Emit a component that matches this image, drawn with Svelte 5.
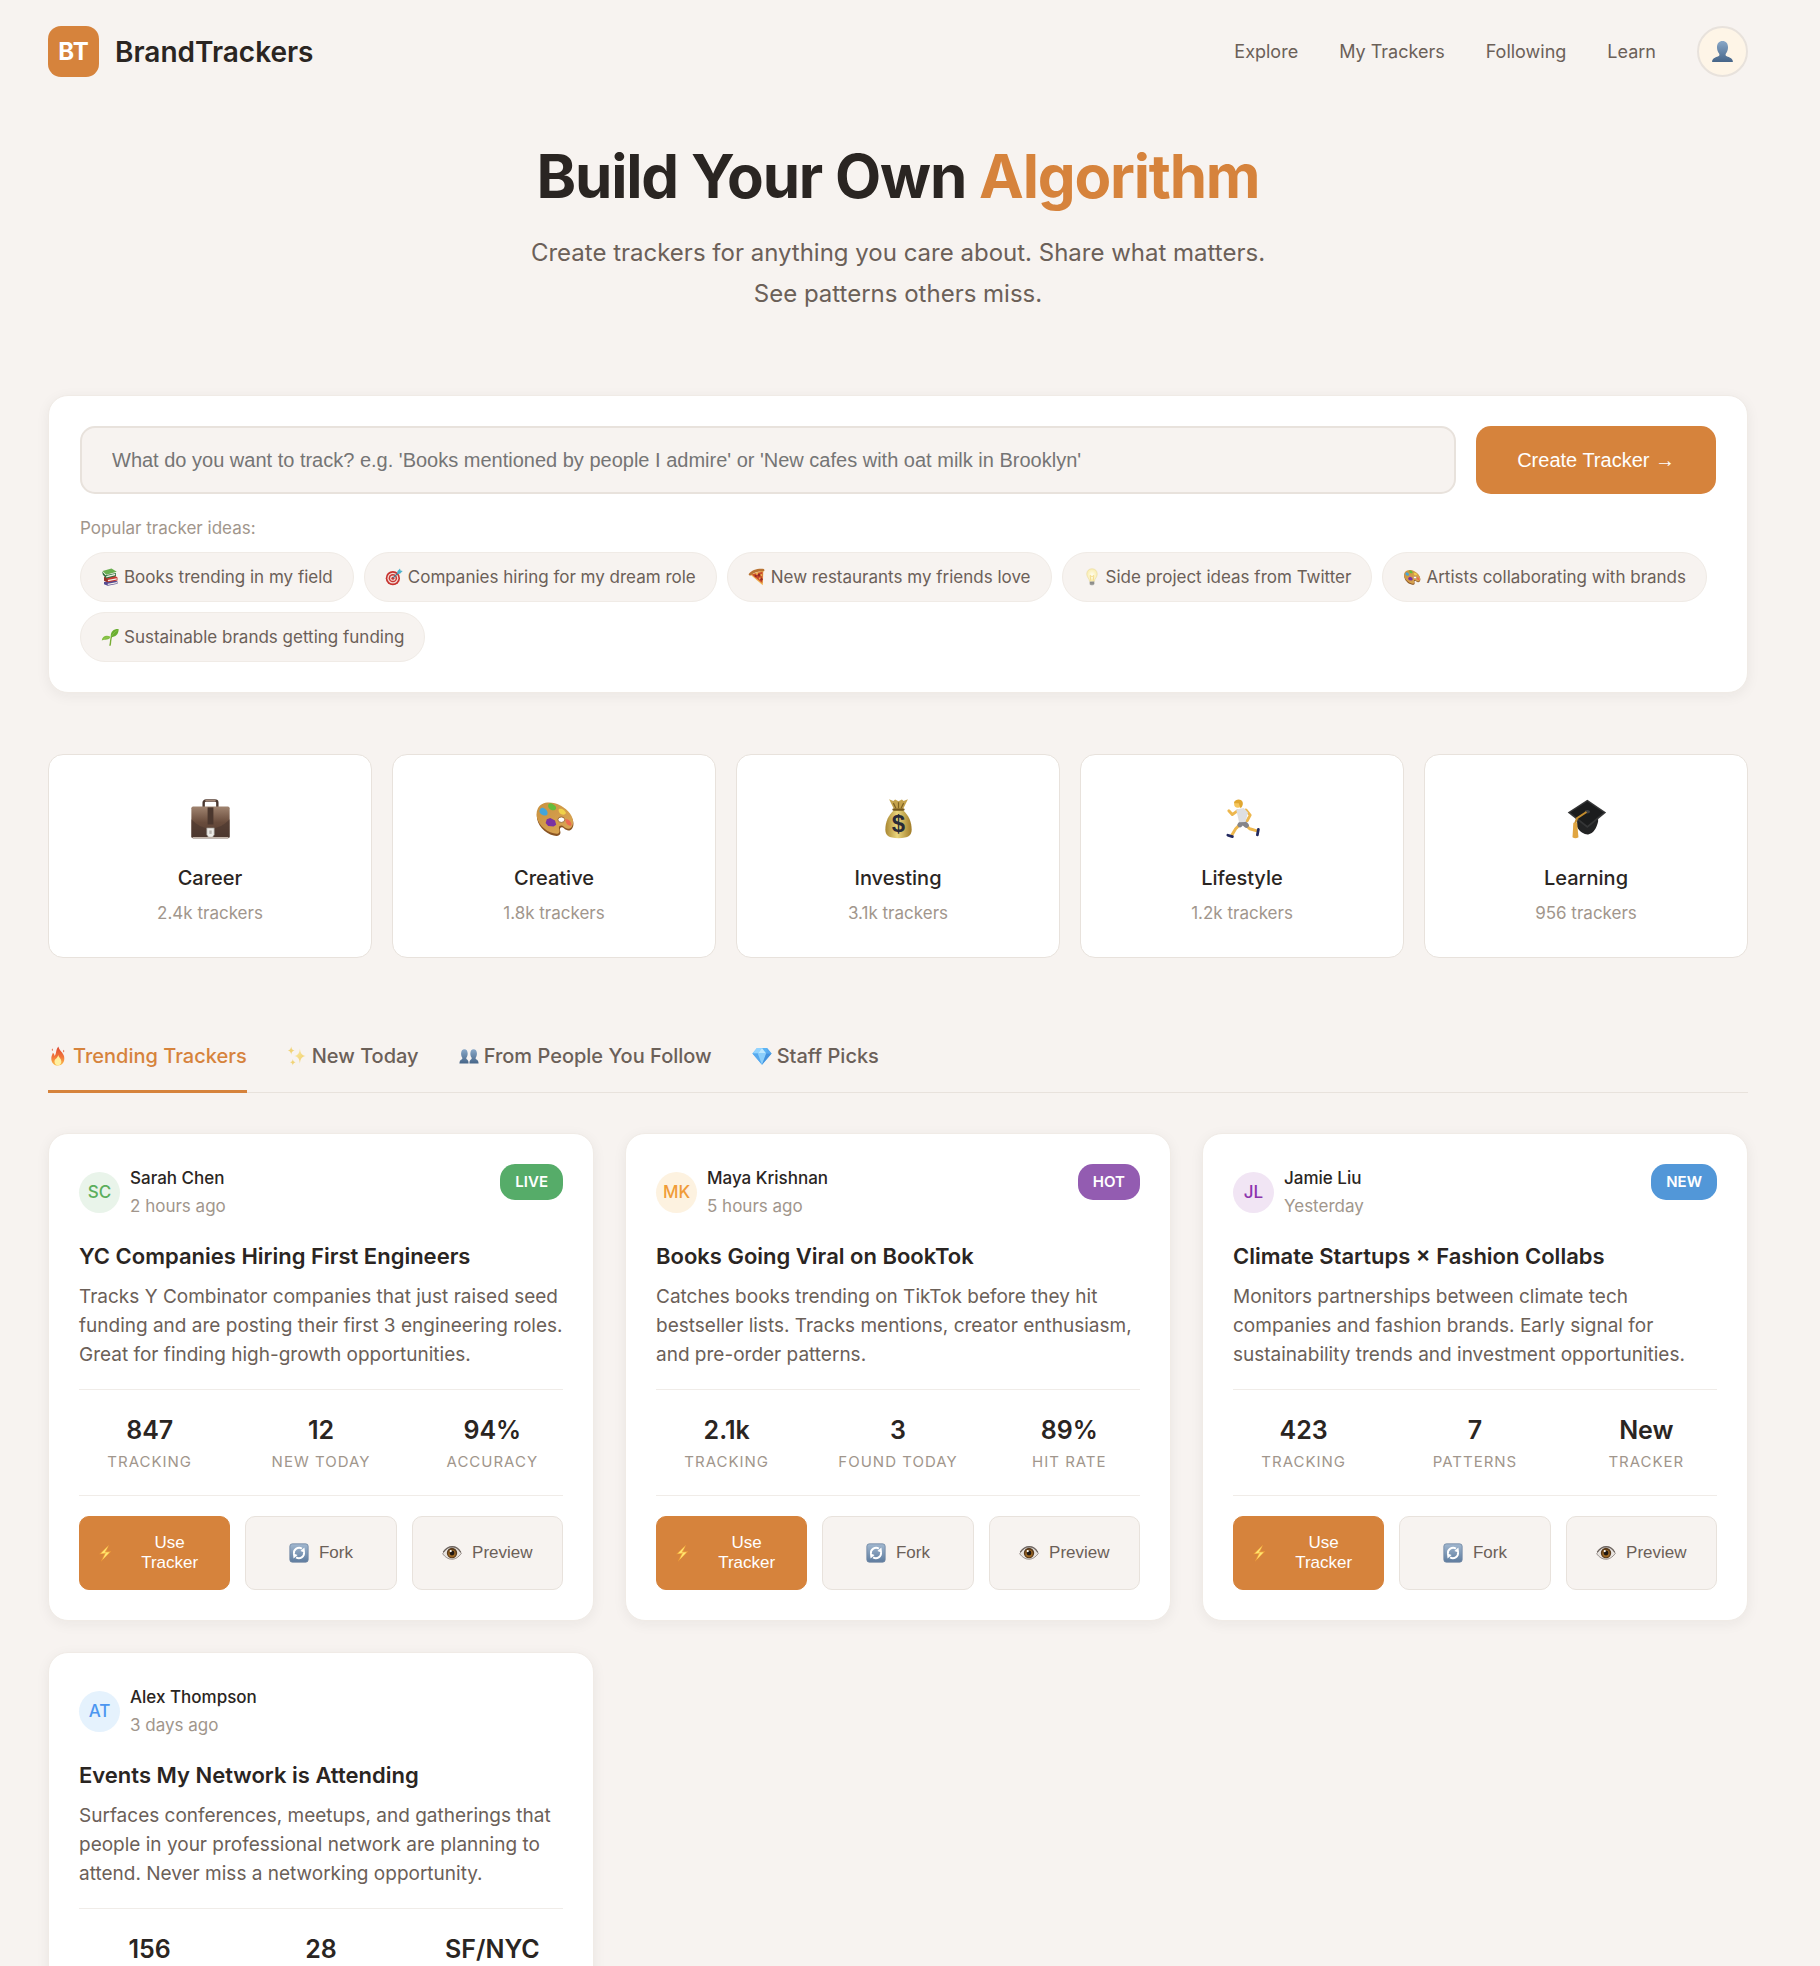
<script>
  const navLinks = ['Explore', 'My Trackers', 'Following', 'Learn'];

  const ideas = [
    { icon: 'books', text: 'Books trending in my field' },
    { icon: 'target', text: 'Companies hiring for my dream role' },
    { icon: 'pizza', text: 'New restaurants my friends love' },
    { icon: 'bulb', text: 'Side project ideas from Twitter' },
    { icon: 'palette', text: 'Artists collaborating with brands' },
    { icon: 'seedling', text: 'Sustainable brands getting funding' }
  ];

  const categories = [
    { icon: 'briefcase', name: 'Career', count: '2.4k trackers' },
    { icon: 'palette', name: 'Creative', count: '1.8k trackers' },
    { icon: 'money', name: 'Investing', count: '3.1k trackers' },
    { icon: 'runner', name: 'Lifestyle', count: '1.2k trackers' },
    { icon: 'cap', name: 'Learning', count: '956 trackers' }
  ];

  const tabs = [
    { icon: 'fire', text: 'Trending Trackers' },
    { icon: 'sparkles', text: 'New Today' },
    { icon: 'people', text: 'From People You Follow' },
    { icon: 'gem', text: 'Staff Picks' }
  ];

  const trackers = [
    {
      initials: 'SC', tone: 'green', author: 'Sarah Chen', time: '2 hours ago', badge: 'LIVE',
      title: 'YC Companies Hiring First Engineers',
      text: 'Tracks Y Combinator companies that just raised seed funding and are posting their first 3 engineering roles. Great for finding high-growth opportunities.',
      stats: [['847', 'Tracking'], ['12', 'New today'], ['94%', 'Accuracy']]
    },
    {
      initials: 'MK', tone: 'amber', author: 'Maya Krishnan', time: '5 hours ago', badge: 'HOT',
      title: 'Books Going Viral on BookTok',
      text: 'Catches books trending on TikTok before they hit bestseller lists. Tracks mentions, creator enthusiasm, and pre-order patterns.',
      stats: [['2.1k', 'Tracking'], ['3', 'Found today'], ['89%', 'Hit rate']]
    },
    {
      initials: 'JL', tone: 'purple', author: 'Jamie Liu', time: 'Yesterday', badge: 'NEW',
      title: 'Climate Startups × Fashion Collabs',
      text: 'Monitors partnerships between climate tech companies and fashion brands. Early signal for sustainability trends and investment opportunities.',
      stats: [['423', 'Tracking'], ['7', 'Patterns'], ['New', 'Tracker']]
    },
    {
      initials: 'AT', tone: 'blue', author: 'Alex Thompson', time: '3 days ago', badge: '',
      title: 'Events My Network is Attending',
      text: 'Surfaces conferences, meetups, and gatherings that people in your professional network are planning to attend. Never miss a networking opportunity.',
      stats: [['156', 'Tracking'], ['28', 'Events'], ['SF/NYC', 'Location']]
    }
  ];

  let query = $state('');
  let activeTab = $state(0);
</script>

{#snippet icon(name)}
  <svg class="icon" viewBox="0 0 24 24" aria-hidden="true">
    {#if name === 'user'}
      <path fill="url(#steel)" d="M12 2c3.3 0 5.3 2.4 5.3 6 0 2.400-.8 4.500-2 5.900-.5.7-.5 1.900.2 2.500 1.300 1 6.500 1.300 6.500 5.600H2c0-4.300 5.200-4.600 6.500-5.600.7-.6.7-1.800.2-2.500-1.200-1.400-2-3.500-2-5.900 0-3.600 2-6 5.300-6z" />
    {:else if name === 'people'}
      <path fill="url(#steel)" d="M6.500 4c2.300 0 3.900 1.900 3.900 5 0 2-.5 3.700-1.400 4.800-.4.600-.3 1.700.3 2.100 1 .7 2.200 1.300 2.200 5.100H.5c0-3.400 1.600-4.200 3-5.100.7-.5.700-1.500.3-2.100-.8-1.100-1.300-2.800-1.300-4.800 0-3.100 1.700-5 4-5zM17.500 4c2.300 0 4 1.900 4 5 0 2-.5 3.700-1.300 4.800-.4.600-.4 1.600.3 2.100 1.400.9 3 1.700 3 5.100h-11c0-3.800 1.200-4.400 2.200-5.100.6-.4.7-1.500.3-2.100-.9-1.100-1.400-2.800-1.400-4.800 0-3.100 1.600-5 3.900-5z" />
    {:else if name === 'books'}
      <path fill="#554a91" d="M4 18.500l13-2.500 5 2v3L9 23.500l-5-2z" />
      <path fill="#f2efe8" d="M9 21l12.500-2.300v1.700L9 22.700z" />
      <path fill="#c53a34" d="M4 12l14-2 4 2.500v4L9 19l-4-2z" />
      <path fill="#f5f2ea" d="M9 16l12-2.200v1.600L9 17.800z" />
      <path fill="#963029" d="M4 12l5 2.500V19l-5-2z" />
      <path fill="#2c6d3a" d="M1.500 4.500L6 9.500l14-3v4L7 14l-4.500-5z" />
      <path fill="#e9efe3" d="M7 10.500l12-2.800v1.800L7 12.500z" />
      <path fill="#6aae50" d="M2 4L14 .8 21 5 7 9z" />
    {:else if name === 'target'}
      <circle cx="10.500" cy="13.500" r="9.500" fill="#c7332f" />
      <circle cx="10.500" cy="13.500" r="7.300" fill="#f3dcd8" />
      <circle cx="10.500" cy="13.500" r="5.600" fill="#cb3934" />
      <circle cx="10.500" cy="13.500" r="3.600" fill="#f3dcd8" />
      <circle cx="10.500" cy="13.500" r="2" fill="#c7332f" />
      <path stroke="#427f94" stroke-width="1.500" d="M10.500 13.500L19 5" />
      <path fill="#4eb2cd" d="M16.500 7.500V4.200L20 .5l.6 2.900 3 .5-3.600 3.600z" />
    {:else if name === 'pizza'}
      <path fill="#edae4c" d="M3 8.500L20.500 3l-.8 20z" />
      <path fill="#c84a2c" d="M5 8.800L19.500 5l-.5 15z" />
      <path fill="#b97332" d="M1 8C5 2.500 13 .3 21 1.200c1 .2 1.200 2.800.2 3C14 4 8 5.500 3.500 10 2.300 10.500.5 9 1 8z" />
      <g fill="#eeb050"><circle cx="12" cy="7.800" r="1.500" /><circle cx="17.500" cy="9.500" r="1.400" /><circle cx="15.800" cy="14" r="1.400" /></g>
      <g fill="#982a20"><circle cx="14.700" cy="9.500" r="1.800" /><circle cx="10.300" cy="10.700" r="1.500" /><circle cx="18" cy="15" r="1.600" /></g>
    {:else if name === 'bulb'}
      <path fill="url(#glow)" stroke="#e6d79c" stroke-width=".7" d="M12 1c4.300 0 7 3 7 7 0 4.500-3.500 6-3.800 10H8.800C8.500 14 5 12.500 5 8c0-4 2.700-7 7-7z" />
      <path fill="none" stroke="#eecb60" stroke-width=".8" d="M10.500 17L9.500 10l2.500 1.500 2.500-1.500-1 7" />
      <path fill="#a9a9a6" d="M9 18h6v3.500L13.500 23h-3L9 21.500z" />
      <path stroke="#6d6d6b" stroke-width=".7" d="M9 19.500l6-.5M9 21.300l6-.5" />
    {:else if name === 'palette'}
      <path fill="#895423" d="M2.500 7c2-4 8-4.500 13.500-1.500 5.500 3 8.500 8.500 6.500 12-1.300 2.200-3.500 1.700-5 .2-1.200-1.200-2.800-.4-2.200 1.400.8 2.400-1 3.700-3.800 2.900C5 20.500-.5 13 2.500 7z" />
      <path fill="url(#wood)" d="M2.300 6c2-4 8-4.500 13.500-1.500 5.500 3 8.500 8.500 6.500 12-1.300 2.200-3.500 1.700-5 .2-1.200-1.200-3.200-.4-2.600 1.400.8 2.400-.7 3.400-3.200 2.600C5 19-.7 12 2.300 6z" />
      <ellipse cx="16" cy="12.700" rx="2" ry="1.600" fill="#fff" stroke="#94602a" stroke-width=".5" />
      <path fill="#42a5dc" d="M3.300 7c1-1.800 2.200-1.500 3.500-.4C8.500 8 8.200 10 7 10.200c-2 .3-4.300-1.200-3.700-3.200z" />
      <path fill="#64bc3c" d="M8.500 3.600c1-1 2-.3 3 .3 2 .9 1.800 3 .2 3.200-2 .3-4.200-1.700-3.200-3.500z" />
      <path fill="#efd149" d="M14.600 6.500c1.200-.9 3.800.6 4.100 2.200.1 1.400-2.700 1.300-3.600.2-.6-.7-1-1.800-.5-2.400z" />
      <path fill="#ed6951" d="M18.700 12.500c1.200-.6 3.500 1.500 3.200 3.300-.3 1.200-2.400 0-2.900-1-.4-.8-.9-1.800-.3-2.300z" />
      <path fill="#7a31a3" d="M7.500 12.500l2-.8 2.800 1.400.7 2.600-1.500 1-3.200-.3-1.500-1.800z" />
    {:else if name === 'seedling'}
      <path fill="none" stroke="#78ad35" stroke-width="1.800" stroke-linecap="round" d="M12 23c1.500-5 0-8 2.500-12" />
      <path fill="#69ad30" d="M13 12C12.500 4.500 17 1.200 23.500 1.500 23.500 8 19.500 12 13 12z" />
      <path fill="#82bd42" d="M1 16.500C1.500 11 7.500 8.500 13 12 10.500 16.500 6 15 1 16.500z" />
      <path fill="none" stroke="#9bd158" stroke-width=".7" d="M14 11c2-3.500 4.500-6 8-8M3 15c3-2 5.500-3 9-3" />
    {:else if name === 'briefcase'}
      <path fill="none" stroke="#4a3830" stroke-width="1.400" d="M8 6V2.700Q8 1.500 9.500 1.500h5Q16 1.500 16 2.700V6" />
      <path stroke="#a38878" stroke-width="1" d="M9 1.500h6" />
      <rect x=".8" y="5" width="22.400" height="18.500" rx="1" fill="url(#leather)" />
      <path fill="#47352d" opacity=".55" d="M.8 12.500q5 5.500 11.200 5.500t11.200-5.500v10q0 1-1 1H1.800q-1 0-1-1z" />
      <path fill="#4b372e" d="M10.300 5.500h3.400v10h-3.400z" />
      <path fill="#edece8" stroke="#8d8882" stroke-width=".4" d="M9.800 17.500h4.400v4L13.200 23h-2.400l-1-1.500z" />
      <path fill="#b9b5b0" d="M11.300 19h1.400v2h-1.400z" />
      <path stroke="#c4b6ab" stroke-width=".7" d="M1.500 23.200h21" />
    {:else if name === 'money'}
      <path fill="url(#gold)" d="M9.500 7C6 10 4.300 14 4.300 18.500 4.300 22 6 23.500 12 23.500s7.700-1.500 7.700-5c0-4.500-1.700-8.500-5.200-11.500z" />
      <path fill="#c4a24c" d="M9.300 6.500L6.500.8l2.500 1 1-.9 2 1 2-1 1 .9 2.500-1-2.800 5.700z" />
      <path fill="none" stroke="#806323" stroke-width=".7" d="M9 3l1.500 3M12 2.500V6M15 3l-1.500 3" />
      <path stroke="#76591d" stroke-width="1.200" stroke-linecap="round" d="M9 6.800h6" />
      <text x="12" y="20" text-anchor="middle" class="dollar">$</text>
    {:else if name === 'runner'}
      <g fill="none" stroke-linecap="round" stroke-linejoin="round">
        <path stroke="#edb74e" stroke-width="1.700" d="M9 7.500L6 9.700 4 7.500M14 7l2.500 3-1.800 3.300M11 15l-3 3-2.200 3.700M13 15l3.200 3 4.300 1.300" />
        <path stroke="#22295f" stroke-width="1.600" d="M3.400 21.800l2.700.8M21.300 18.300l-.6 3.300" />
        <path stroke="#85858a" stroke-width="3" d="M12 14l-1.500 1.700M12 14l2.300 2" />
      </g>
      <path fill="#dedfe1" d="M8.300 6.700l4.500-.9 2.400 2.700-1.400 5.500-3.800.2z" />
      <circle cx="9.300" cy="3.500" r="2.200" fill="#f6c65c" />
      <path fill="#e0a731" d="M7 3c.2-2.200 4-3 5-.8.600 1.500-.2 3.200-1.200 3.800L9.800 3z" />
    {:else if name === 'cap'}
      <path fill="#222324" d="M6.500 11v6c1.500 3 4.500 4.500 6.500 4.300 3-.3 5-3.800 5.800-7.500V9z" />
      <path fill="#353637" d="M12.500 1L23.500 8.500l-11 9L1 8.500z" />
      <path fill="#1b1c1d" d="M12.500 2L22 8.500l-9.500 7.800L2.500 8.500z" />
      <ellipse cx="12.500" cy="8" rx="1.600" ry="1" fill="#404142" />
      <path fill="none" stroke="#c38c2d" stroke-width="1.200" d="M12 8.200L6.500 11.800 5.300 15" />
      <path fill="#e0a541" d="M4.300 14.500h2.200l.8 8.500q-1.800 1-3.500 0z" />
    {:else if name === 'fire'}
      <path fill="url(#flame)" d="M12.500.5c.4 4.500 6 7 6.900 12.500C20.500 20 16.500 23.500 12 23.500S3.500 20 4 14c.2-2.500 1.500-4 1.800-6 1.500 1 2 2.500 2 4C10.500 9 9 4 12.500.5z" />
      <path fill="#e45b33" d="M5 3c1 .9 1 2 .3 3C4.400 5.200 4.400 4 5 3zM18.800 4.500c1 1 .9 2.200 0 3.200-.8-1-.7-2.200 0-3.200z" />
      <path fill="#fff0a0" d="M12.300 10.500c.3 3.500 3.700 4.500 3.700 8 0 2.800-1.600 4.500-4 4.500s-4.200-1.700-4.200-4.500c0-3 4-4 4.500-8z" />
    {:else if name === 'sparkles'}
      <path fill="url(#star)" d="M15.500 3c.7 6 2 8 7 9-5 1-6.300 3-7 9-.7-6-2-8-7-9 5-1 6.300-3 7-9z" />
      <path fill="#f1d376" d="M5 .5c.4 3 1.200 4.200 4 5-2.800.8-3.600 2-4 5-.4-3-1.200-4.200-4-5 2.800-.8 3.600-2 4-5zM7 15.500c.3 2.300 1 3.300 3.300 4-2.300.7-3 1.700-3.300 4-.3-2.300-1-3.300-3.300-4 2.300-.7 3-1.700 3.300-4z" />
    {:else if name === 'gem'}
      <path fill="#5cb4f4" d="M6 2.500h12L23.500 9 12 22.500.5 9z" />
      <path fill="#93d4ff" d="M6 2.500L.5 9H7l5-6.500z" />
      <path fill="#bde8ff" d="M12 2.500L7 9h10z" />
      <path fill="#58a9ee" d="M18 2.500L17 9h6.500zM7 9l5 13.500L.5 9z" />
      <path fill="#8ccffb" d="M7 9h10l-5 13.500z" />
      <path fill="#4492dd" d="M17 9h6.500L12 22.500z" />
    {:else if name === 'bolt'}
      <path fill="#f2a33a" d="M17 2L5 13.500l6.500-.5L7 22.500 19.500 10l-6.300.5z" />
      <path fill="#ffe570" d="M15.800 3.500L7 12.500l6-.5-3.800 7.700 8.300-8.700-6 .5z" />
    {:else if name === 'refresh'}
      <rect x="1" y="1" width="22" height="22" rx="3" fill="url(#tile)" stroke="#7188a3" />
      <path fill="none" stroke="#fff" stroke-width="2.300" d="M6 13a6.200 6.200 0 0 1 9.500-6.200M18 11a6.200 6.200 0 0 1-9.500 6.200" />
      <path fill="#fff" d="M18.500 5.500l.8 6.300-5.600-2.200zM5.500 18.500l-.8-6.300 5.600 2.200z" />
    {:else if name === 'eye'}
      <path fill="#e7e3df" stroke="#8a817c" stroke-width="1" d="M.8 13C4 7.500 7.500 5 12.300 5c4.700 0 8.200 2.800 10.900 7.500-3.700 5-7.500 7-11.500 7C7.500 19.500 3.800 17 .8 13z" />
      <circle cx="12" cy="12" r="6.200" fill="#5a3b1c" />
      <circle cx="12" cy="12.500" r="4.500" fill="#9b6724" />
      <circle cx="12" cy="12" r="2.900" fill="#201812" />
      <circle cx="10.500" cy="9.700" r="1.300" fill="#fff" />
      <path fill="none" stroke="#6b625d" stroke-width="1.300" d="M1.500 11C4.500 6.500 8 4.300 12.300 4.300S20 6.500 22.500 11" />
    {/if}
  </svg>
{/snippet}

<svg class="defs" width="0" height="0" aria-hidden="true">
  <defs>
    <linearGradient id="steel" x2="0" y2="1"><stop stop-color="#89a8c8" /><stop offset="1" stop-color="#466588" /></linearGradient>
    <linearGradient id="leather" x2="0" y2="1"><stop stop-color="#a08470" /><stop offset=".5" stop-color="#694c3c" /><stop offset="1" stop-color="#513a30" /></linearGradient>
    <linearGradient id="gold" x2="1" y2="0"><stop stop-color="#a98732" /><stop offset=".45" stop-color="#ead67d" /><stop offset="1" stop-color="#a17c28" /></linearGradient>
    <linearGradient id="wood" x2="1" y2="1"><stop stop-color="#c9913f" /><stop offset="1" stop-color="#dba755" /></linearGradient>
    <linearGradient id="flame" x2="0" y2="1"><stop stop-color="#dc4530" /><stop offset=".55" stop-color="#f2773a" /><stop offset="1" stop-color="#fbc04d" /></linearGradient>
    <linearGradient id="star" x2="1" y2="1"><stop stop-color="#fbeeae" /><stop offset="1" stop-color="#efca60" /></linearGradient>
    <linearGradient id="tile" x2="0" y2="1"><stop stop-color="#a2b8d0" /><stop offset="1" stop-color="#5d7b9e" /></linearGradient>
    <radialGradient id="glow"><stop stop-color="#fffef0" /><stop offset="1" stop-color="#faedb0" /></radialGradient>
  </defs>
</svg>

<div class="page">
  <header>
    <a class="brand" href="#home"><span class="logo">BT</span>BrandTrackers</a>
    <nav>
      {#each navLinks as link}
        <a href="#{link}">{link}</a>
      {/each}
      <button class="profile" aria-label="Profile">{@render icon('user')}</button>
    </nav>
  </header>

  <main>
    <section class="hero">
      <h1>Build Your Own <span>Algorithm</span></h1>
      <p>Create trackers for anything you care about. Share what matters.<br />See patterns others miss.</p>
    </section>

    <section class="create">
      <form onsubmit={(e) => e.preventDefault()}>
        <input
          type="text"
          bind:value={query}
          aria-label="What do you want to track?"
          placeholder="What do you want to track? e.g. 'Books mentioned by people I admire' or 'New cafes with oat milk in Brooklyn'"
        />
        <button type="submit">Create Tracker →</button>
      </form>
      <p class="label">Popular tracker ideas:</p>
      <div class="chips">
        {#each ideas as idea}
          <button onclick={() => (query = idea.text)}>{@render icon(idea.icon)}{idea.text}</button>
        {/each}
      </div>
    </section>

    <section class="categories">
      {#each categories as category}
        <a class="category" href="#{category.name}">
          <span class="picture">{@render icon(category.icon)}</span>
          <strong>{category.name}</strong>
          <span class="count">{category.count}</span>
        </a>
      {/each}
    </section>

    <div class="tabs" role="tablist">
      {#each tabs as tab, i}
        <button role="tab" aria-selected={activeTab === i} class:active={activeTab === i} onclick={() => (activeTab = i)}>
          {@render icon(tab.icon)}{tab.text}
        </button>
      {/each}
    </div>

    <section class="trackers">
      {#each trackers as tracker}
        <article>
          <div class="top">
            <div class="author">
              <span class="avatar {tracker.tone}">{tracker.initials}</span>
              <div>
                <div class="name">{tracker.author}</div>
                <div class="time">{tracker.time}</div>
              </div>
            </div>
            {#if tracker.badge}
              <span class="badge {tracker.badge.toLowerCase()}">{tracker.badge}</span>
            {/if}
          </div>
          <h2>{tracker.title}</h2>
          <p>{tracker.text}</p>
          <div class="stats">
            {#each tracker.stats as [value, caption]}
              <div><b>{value}</b><span>{caption}</span></div>
            {/each}
          </div>
          <div class="actions">
            <button class="primary">{@render icon('bolt')}<span>Use Tracker</span></button>
            <button>{@render icon('refresh')}<span>Fork</span></button>
            <button>{@render icon('eye')}<span>Preview</span></button>
          </div>
        </article>
      {/each}
    </section>
  </main>
</div>

<style>
  :global(body) {
    margin: 0;
    background: #f7f3f0;
  }
  .page {
    --accent: #d6833c;
    --ink: #2a2522;
    --soft: #6b6058;
    --faint: #a1968c;
    --line: #e8e2dc;
    --wash: #f7f3f0;
    --plain: 'Liberation Sans', Arial, sans-serif;
    box-sizing: border-box;
    padding: 0 72px 40px 48px;
    background: var(--wash);
    color: var(--ink);
    font-family: Inter, sans-serif;
    font-size: 17px;
    line-height: 28px;
  }
  .page :global(*) {
    box-sizing: border-box;
  }
  .defs {
    position: absolute;
  }
  .icon {
    display: block;
    flex: none;
    width: 18px;
    height: 18px;
  }
  .dollar {
    font: bold 14px 'Liberation Sans', Arial, sans-serif;
    fill: #282a38;
  }
  a {
    color: inherit;
    text-decoration: none;
  }
  button {
    font-size: 17px;
    cursor: pointer;
  }
  h1, h2, p {
    margin: 0;
  }

  header {
    display: flex;
    align-items: center;
    justify-content: space-between;
    padding: 26px 0;
  }
  .brand {
    display: flex;
    align-items: center;
    gap: 16px;
    font-size: 28px;
    font-weight: 600;
  }
  .logo {
    display: grid;
    place-items: center;
    width: 51px;
    height: 51px;
    border-radius: 13px;
    background: var(--accent);
    color: #fff;
    font-size: 24px;
    font-weight: 700;
  }
  nav {
    display: flex;
    align-items: center;
    gap: 41px;
    color: var(--soft);
    font-size: 18px;
  }
  .profile {
    display: grid;
    place-items: center;
    width: 51px;
    height: 51px;
    padding: 0;
    border: 2px solid var(--line);
    border-radius: 50%;
    background: #fef5e7;
  }
  .profile .icon {
    width: 25px;
    height: 25px;
  }

  .hero {
    padding: 37px 0 81px;
    text-align: center;
  }
  h1 {
    margin-bottom: 19px;
    font-size: 60px;
    font-weight: 700;
    letter-spacing: -0.02em;
    line-height: 73px;
  }
  h1 span {
    color: var(--accent);
  }
  .hero p {
    color: var(--soft);
    font-size: 24px;
    line-height: 41px;
  }

  .create {
    padding: 30px 31px;
    border: 1px solid #f0ebe6;
    border-radius: 20px;
    background: #fff;
    box-shadow: 0 3px 14px rgba(42, 37, 34, 0.06);
  }
  form {
    display: flex;
    gap: 20px;
  }
  input {
    flex: 1;
    min-width: 0;
    height: 68px;
    padding: 0 30px;
    border: 2px solid var(--line);
    border-radius: 15px;
    background: var(--wash);
    font: 20px var(--plain);
  }
  input::placeholder {
    color: #757575;
  }
  form button {
    padding: 0 41px;
    border: 0;
    border-radius: 15px;
    background: var(--accent);
    color: #fff;
    font: 20px var(--plain);
  }
  .label {
    margin: 20px 0 10px;
    color: var(--faint);
  }
  .chips {
    display: flex;
    flex-wrap: wrap;
    gap: 10px;
  }
  .chips button {
    display: flex;
    align-items: center;
    gap: 5px;
    padding: 10px 20px;
    border: 1px solid #f0ebe6;
    border-radius: 25px;
    background: var(--wash);
    color: var(--soft);
    font-family: inherit;
    line-height: 28px;
  }

  .categories {
    display: grid;
    grid-template-columns: repeat(5, 1fr);
    gap: 20px;
    margin: 61px 0 62px;
  }
  .category {
    display: flex;
    flex-direction: column;
    align-items: center;
    padding: 30px 20px;
    border: 1px solid var(--line);
    border-radius: 15px;
    background: #fff;
  }
  .picture {
    display: grid;
    place-items: center;
    height: 67px;
    margin-bottom: 10px;
  }
  .picture .icon {
    width: 41px;
    height: 41px;
  }
  .category strong {
    margin-bottom: 5px;
    font-size: 20px;
    font-weight: 500;
    line-height: 32px;
  }
  .count {
    color: var(--faint);
  }

  .tabs {
    display: flex;
    gap: 40px;
    margin-bottom: 40px;
    border-bottom: 1px solid var(--line);
  }
  .tabs button {
    display: flex;
    align-items: center;
    gap: 5px;
    margin-bottom: -1px;
    padding: 20px 0 18px;
    border: 0;
    border-bottom: 3px solid transparent;
    background: none;
    color: var(--soft);
    font-family: inherit;
    font-size: 20px;
    font-weight: 500;
    line-height: 32px;
  }
  .tabs .icon {
    width: 20px;
    height: 20px;
  }
  .tabs .active {
    border-color: var(--accent);
    color: var(--accent);
  }

  .trackers {
    display: grid;
    grid-template-columns: repeat(3, 1fr);
    gap: 31px;
  }
  article {
    padding: 30px;
    border: 1px solid #f0ebe6;
    border-radius: 20px;
    background: #fff;
    box-shadow: 0 3px 14px rgba(42, 37, 34, 0.06);
  }
  .top {
    display: flex;
    align-items: flex-start;
    justify-content: space-between;
  }
  .author {
    display: flex;
    align-items: center;
    gap: 10px;
  }
  .avatar {
    display: grid;
    place-items: center;
    width: 41px;
    height: 41px;
    border-radius: 50%;
    font-weight: 500;
  }
  .green { background: #e9f4ea; color: #5bae5c; }
  .amber { background: #fdf2e0; color: #f09c38; }
  .purple { background: #f1e5f4; color: #8c34ad; }
  .blue { background: #e5f2fd; color: #4c96f0; }
  .name {
    font-weight: 500;
  }
  .time {
    color: var(--faint);
  }
  .badge {
    padding: 6px 15px;
    border-radius: 15px;
    color: #fff;
    font-size: 15px;
    font-weight: 600;
    line-height: 24px;
  }
  .live { background: #56ac69; }
  .hot { background: #935cb1; }
  .new { background: #5297d8; }
  h2 {
    margin: 21px 0 11px;
    font-size: 22px;
    font-weight: 600;
    line-height: 30px;
  }
  article p {
    color: var(--soft);
    font-size: 19px;
    line-height: 29px;
  }
  .stats {
    display: grid;
    grid-template-columns: repeat(3, 1fr);
    gap: 30px;
    margin: 20px 0;
    padding: 20px 0 21px;
    border: solid #f0ece8;
    border-width: 1px 0;
    text-align: center;
  }
  .stats b {
    display: block;
    font-size: 25px;
    font-weight: 600;
    line-height: 40px;
  }
  .stats span {
    display: block;
    color: var(--faint);
    font-size: 15px;
    letter-spacing: 1px;
    line-height: 24px;
    text-transform: uppercase;
    white-space: nowrap;
  }
  .actions {
    display: grid;
    grid-template-columns: repeat(3, 1fr);
    gap: 15px;
  }
  .actions button {
    display: flex;
    align-items: center;
    justify-content: center;
    gap: 10px;
    height: 74px;
    padding: 0 15px;
    border: 1px solid var(--line);
    border-radius: 10px;
    background: var(--wash);
    color: var(--soft);
    font: 17px/20px var(--plain);
  }
  .actions .primary {
    border-color: var(--accent);
    background: var(--accent);
    color: #fff;
  }
  .actions .icon {
    width: 20px;
    height: 20px;
  }
</style>
